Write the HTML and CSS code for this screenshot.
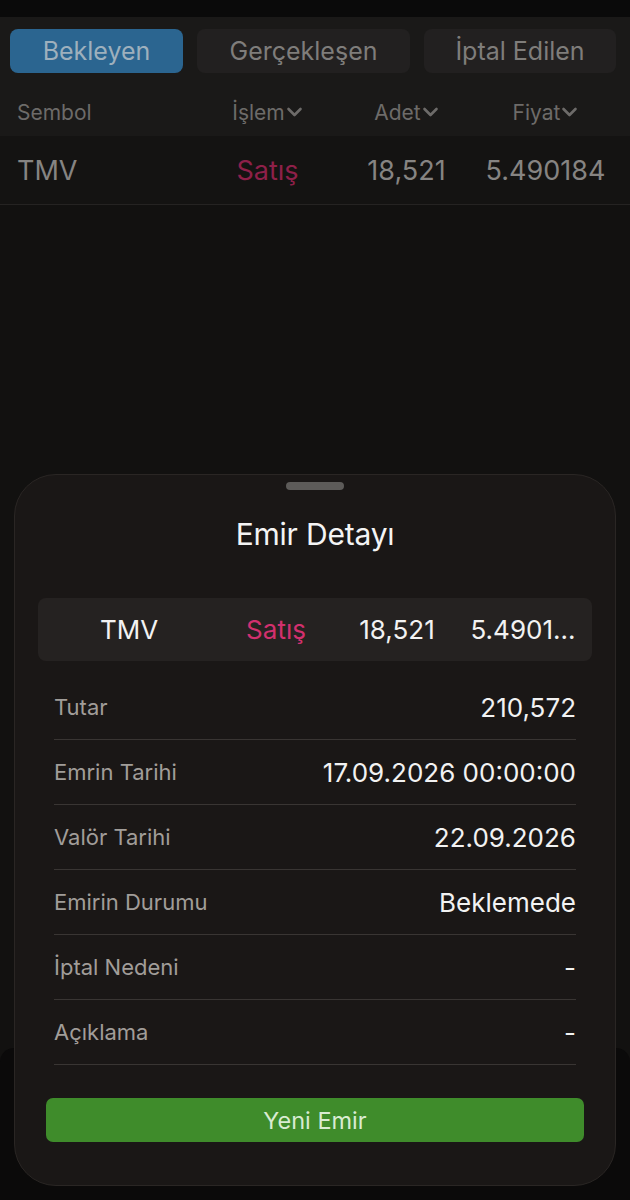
FILE: index.html
```html
<!DOCTYPE html>
<html lang="tr">
<head>
<meta charset="utf-8">
<title>Emir Detayı</title>
<link rel="stylesheet" href="styles.css">
</head>
<body>
<div class="screen">
  <div class="statusbar"></div>
  <div class="tabs">
    <div class="tab active">Bekleyen</div>
    <div class="tab">Gerçekleşen</div>
    <div class="tab">İptal Edilen</div>
  </div>
  <div class="thead">
    <div class="c first">Sembol</div>
    <div class="c">İşlem<svg class="chev" viewBox="0 0 14 10"><path d="M2 2.5 L7 7.5 L12 2.5" /></svg></div>
    <div class="c">Adet<svg class="chev" viewBox="0 0 14 10"><path d="M2 2.5 L7 7.5 L12 2.5" /></svg></div>
    <div class="c">Fiyat<svg class="chev" viewBox="0 0 14 10"><path d="M2 2.5 L7 7.5 L12 2.5" /></svg></div>
  </div>
  <div class="trow">
    <div class="c first">TMV</div>
    <div class="c sell">Satış</div>
    <div class="c">18,521</div>
    <div class="c">5.490184</div>
  </div>

  <div class="backsheet"></div>

  <div class="sheet">
    <div class="handle"></div>
    <h1 class="title">Emir Detayı</h1>
    <div class="summary">
      <div class="s">TMV</div>
      <div class="s sell">Satış</div>
      <div class="s">18,521</div>
      <div class="s">5.4901...</div>
    </div>
    <div class="details">
      <div class="drow"><span class="lbl">Tutar</span><span class="val">210,572</span></div>
      <div class="drow"><span class="lbl">Emrin Tarihi</span><span class="val">17.09.2026 00:00:00</span></div>
      <div class="drow"><span class="lbl">Valör Tarihi</span><span class="val">22.09.2026</span></div>
      <div class="drow"><span class="lbl">Emirin Durumu</span><span class="val">Beklemede</span></div>
      <div class="drow"><span class="lbl">İptal Nedeni</span><span class="val">-</span></div>
      <div class="drow"><span class="lbl">Açıklama</span><span class="val">-</span></div>
    </div>
    <button class="cta">Yeni Emir</button>
  </div>
</div>
</body>
</html>
```

FILE: styles.css
```css
* { box-sizing: border-box; }
html, body { margin: 0; padding: 0; }
body {
  background: #121110;
  font-family: "Inter", "Noto Sans", sans-serif;
  width: 630px;
  height: 1200px;
  overflow: hidden;
}
.screen {
  position: relative;
  width: 630px;
  height: 1200px;
  background: #121110;
}
.statusbar {
  height: 17px;
  background: #0a0a0a;
}
.tabs {
  display: grid;
  grid-template-columns: 173px 213px 192px;
  gap: 14px;
  padding: 12px 14px 15px 10px;
  background: #1a1918;
}
.tab {
  height: 44px;
  border-radius: 8px;
  background: #222020;
  color: #7f7d7b;
  font-size: 25px;
  display: flex;
  align-items: center;
  justify-content: center;
}
.tab.active {
  background: #2b6590;
  color: #9eb0bd;
}
.thead, .trow {
  display: grid;
  grid-template-columns: 181px repeat(3, 139px);
  padding: 0 15px 0 17px;
  align-items: center;
}
.thead {
  height: 48px;
  background: #1a1918;
  color: #6d6b69;
  font-size: 21px;
}
.trow {
  height: 69px;
  background: #141312;
  border-bottom: 1px solid #252322;
  color: #868482;
  font-size: 27px;
}
.c {
  display: flex;
  align-items: center;
  justify-content: center;
}
.c.first { justify-content: flex-start; }
.trow .sell { color: #8e2049; }
.chev {
  width: 17px;
  height: 12px;
  margin-left: 1px;
  fill: none;
  stroke: #6d6b69;
  stroke-width: 2.2;
  stroke-linecap: round;
  stroke-linejoin: round;
}
.backsheet {
  position: absolute;
  left: 0;
  right: 0;
  top: 1048px;
  bottom: 0;
  background: #0b0a0a;
  border-radius: 14px 14px 0 0;
}
.sheet {
  position: absolute;
  left: 14px;
  top: 474px;
  width: 602px;
  height: 712px;
  background: #1a1716;
  border: 1px solid #2a2624;
  border-radius: 42px;
  display: flex;
  flex-direction: column;
  align-items: center;
}
.handle {
  margin-top: 7px;
  width: 58px;
  height: 8px;
  border-radius: 4px;
  background: #5d5b59;
}
.title {
  margin: 26px 0 0;
  height: 36px;
  line-height: 36px;
  font-size: 30px;
  font-weight: 400;
  color: #f4f4f4;
  letter-spacing: -0.2px;
}
.summary {
  margin-top: 46px;
  width: 554px;
  height: 63px;
  border-radius: 8px;
  background: #252221;
  display: grid;
  grid-template-columns: 182px 112px 130px 122px;
  align-items: center;
  color: #f2f2f2;
  font-size: 26px;
}
.s { text-align: center; white-space: nowrap; }
.summary .sell { color: #d2306e; }
.details {
  margin-top: 14px;
  width: 522px;
  display: flex;
  flex-direction: column;
}
.drow {
  height: 65px;
  border-bottom: 1px solid #393533;
  display: flex;
  align-items: center;
  justify-content: space-between;
}
.lbl {
  color: #a19d99;
  font-size: 22px;
}
.val {
  color: #f2f2f2;
  font-size: 26px;
}
.cta {
  margin-top: 33px;
  width: 538px;
  height: 44px;
  border: none;
  border-radius: 7px;
  background: #3f8c2b;
  color: #d9ebd2;
  font-family: "Inter", "Noto Sans", sans-serif;
  font-size: 23.5px;
  font-weight: 400;
  padding: 0;
}
```
